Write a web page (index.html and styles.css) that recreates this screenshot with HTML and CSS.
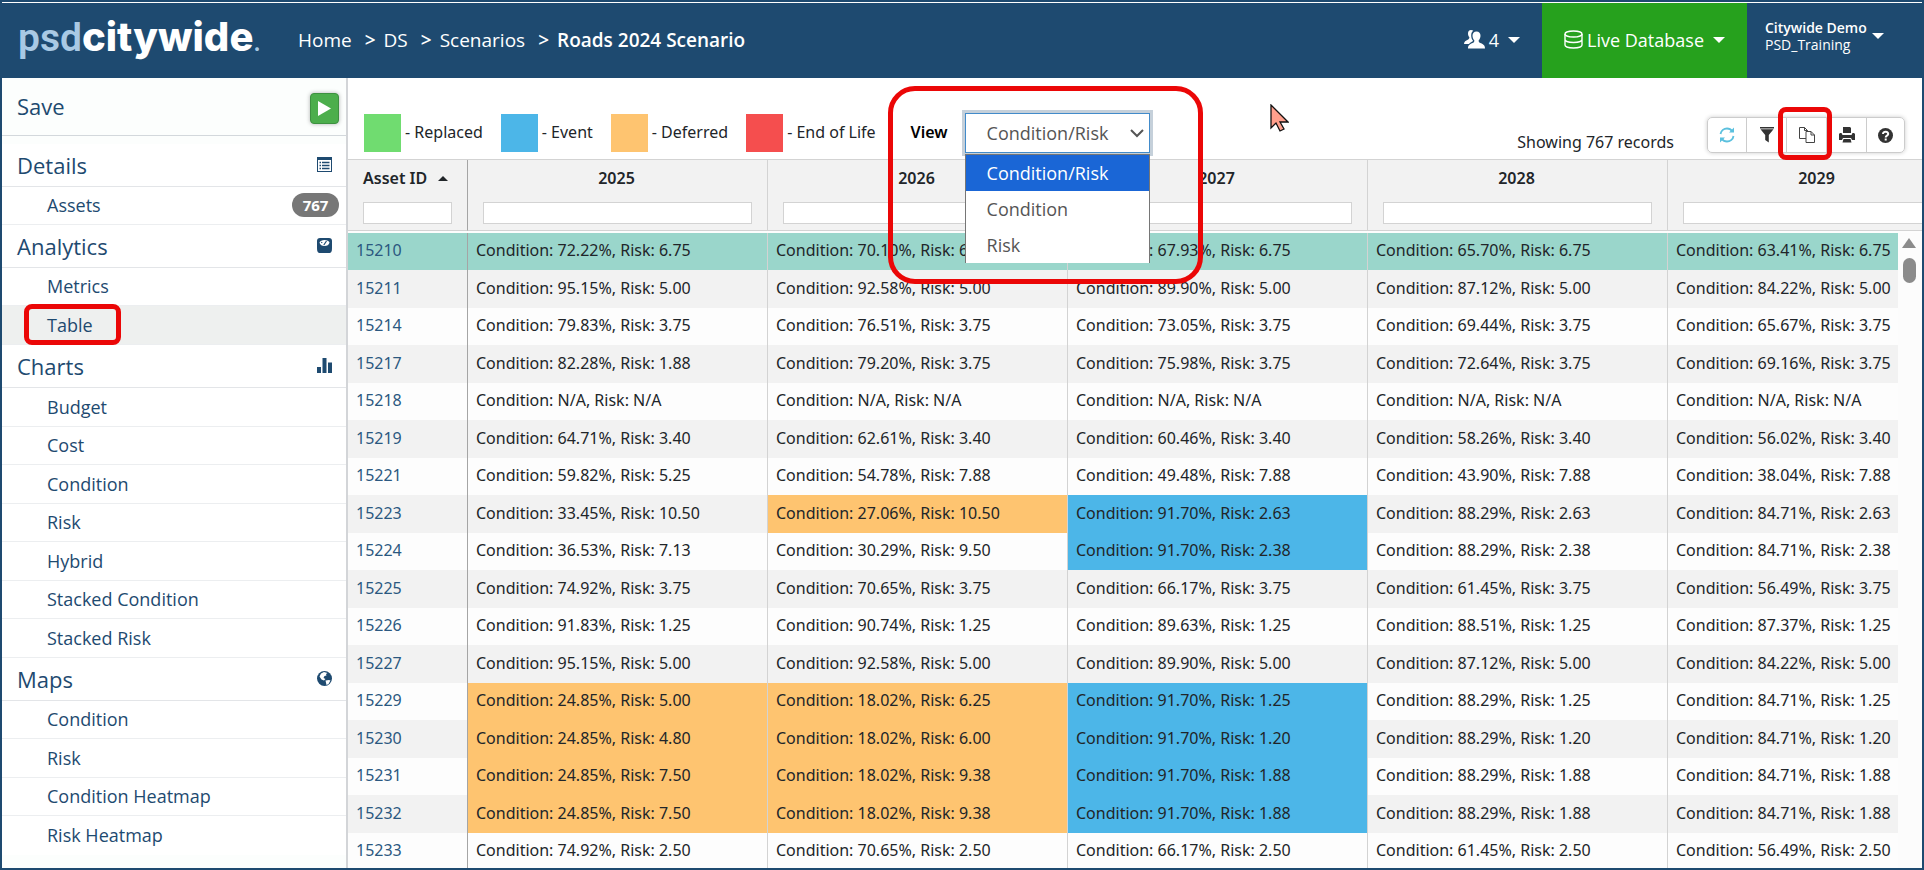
FILE: index.html
```html
<!DOCTYPE html>
<html lang="en">

<head>
    <meta charset="utf-8">
    <title>Roads 2024 Scenario</title>
    <link rel="stylesheet" href="styles.css">
</head>

<body>
    <div class="app">
        <header class="topbar">
            <a href="#" class="logo"><span class="logo-light">psd</span>citywide<span class="logo-dot">.</span></a>
            <nav class="breadcrumbs">
                <a href="#">Home</a>
                <span class="sep">&gt;</span>
                <a href="#">DS</a>
                <span class="sep">&gt;</span>
                <a href="#">Scenarios</a>
                <span class="sep">&gt;</span>
                <strong>Roads 2024 Scenario</strong>
            </nav>
            <button type="button" class="top-button users">
                <svg width="21" height="19" viewBox="0 0 21 19" fill="currentColor">
                    <path d="M7 0c-2 0-3 1.500-3 3.500 0 1.500.5 2.800 1.300 3.600.2 1.400-.3 2-1.500 2.600C1.800 10.700 0 11.500 0 14h5c1-1.500 3-2.300 4.200-3-1.400-1.500-2-3.300-2-5.500C7.200 3 8 1.500 9.300.8 8.700.3 8 0 7 0z" />
                    <path d="M12.500 1.500c-2.600 0-4 1.700-4 4.200 0 1.800.7 3.500 1.800 4.500.3 1.700-.6 2.300-2.300 3.100C6 14.300 4 15 4 18.500h17c0-3.500-2-4.200-4-5.200-1.700-.8-2.600-1.400-2.300-3.100 1.100-1 1.800-2.700 1.800-4.500 0-2.500-1.400-4.200-4-4.200z" />
                </svg>
                4<span class="caret"></span>
            </button>
            <button type="button" class="top-button database">
                <svg width="19" height="19" viewBox="0 0 19 19" fill="none" stroke="currentColor" stroke-width="1.400">
                    <ellipse cx="9.500" cy="4" rx="8.500" ry="3" />
                    <path d="M1 4v11c0 1.700 3.800 3 8.500 3s8.500-1.300 8.500-3V4M1 9.500c0 1.700 3.800 3 8.500 3s8.500-1.300 8.500-3" />
                </svg>
                Live Database<span class="caret"></span>
            </button>
            <button type="button" class="top-button account">
                <span class="account-name"><strong>Citywide Demo</strong>PSD_Training</span>
                <span class="caret"></span>
            </button>
        </header>

        <div class="body">
            <aside class="sidebar">
                <div class="save-row">
                    <a href="#">Save</a>
                    <button type="button" class="run-button" aria-label="Run">
                        <svg width="13" height="15" viewBox="0 0 13 15"><path d="M0 0l13 7.500L0 15z" fill="#fff" /></svg>
                    </button>
                </div>
                <h2>Details
                    <svg width="15" height="15" viewBox="0 0 15 15">
                        <path d="M0 0h15v15H0z" fill="#1e4a70" />
                        <path d="M1 3h13v11H1z" fill="#fff" />
                        <path d="M2.500 5.500H4M2.500 8.500H4M2.500 11.500H4M5 5.500h7.500M5 8.500h7.500M5 11.500h7.500" stroke="#1e4a70" stroke-width="1.600" />
                    </svg>
                </h2>
                <ul>
                    <li><a href="#">Assets</a><span class="badge">767</span></li>
                </ul>
                <h2>Analytics
                    <svg width="15" height="15" viewBox="0 0 15 15">
                        <path d="M3 0h9c2 0 3 1 3 3v7c0 4-1 5-3 5H3c-2 0-3-1-3-5V3c0-2 1-3 3-3z" fill="#1e4a70" />
                        <path d="M2.500 4.500C3.500 1 11.500 1 12.500 4.500c-.5 2.500-2.500 3.500-5 3.500s-4.500-1-5-3.500z" fill="#fff" />
                        <path d="M6.800 7l2.700-4M4.500 5l.5-1" stroke="#1e4a70" stroke-width="1.200" />
                    </svg>
                </h2>
                <ul>
                    <li><a href="#">Metrics</a></li>
                    <li class="active"><a href="#">Table</a><span class="mark mark-table"></span></li>
                </ul>
                <h2>Charts
                    <svg width="15" height="15" viewBox="0 0 15 15" fill="#1e4a70">
                        <path d="M0 9h4v6H0zM5.500 0h4v15h-4zM11 4.500h4V15h-4z" />
                    </svg>
                </h2>
                <ul class="charts">
                    <li><a href="#">Budget</a></li>
                    <li><a href="#">Cost</a></li>
                    <li><a href="#">Condition</a></li>
                    <li><a href="#">Risk</a></li>
                    <li><a href="#">Hybrid</a></li>
                    <li><a href="#">Stacked Condition</a></li>
                    <li><a href="#">Stacked Risk</a></li>
                </ul>
                <h2>Maps
                    <svg width="15" height="15" viewBox="0 0 15 15">
                        <circle cx="7.500" cy="7.500" r="7.500" fill="#1e4a70" />
                        <path d="M4 2.500l3-1.500 3.500 1-1.500 1 .5 1.500-2 .5L6.500 7l2 1L7 9.500 4.500 8.500 2.500 5.500zM8.500 9.500l3.500-.5 1.500.5-2 3.500-2 1z" fill="#fff" />
                    </svg>
                </h2>
                <ul class="maps">
                    <li><a href="#">Condition</a></li>
                    <li><a href="#">Risk</a></li>
                    <li><a href="#">Condition Heatmap</a></li>
                    <li><a href="#">Risk Heatmap</a></li>
                </ul>
            </aside>

            <main class="content">
                <div class="toolbar">
                    <div class="legend">
                        <span class="swatch replaced"></span><span class="legend-text">- Replaced</span>
                        <span class="swatch event"></span><span class="legend-text">- Event</span>
                        <span class="swatch deferred"></span><span class="legend-text">- Deferred</span>
                        <span class="swatch end"></span><span class="legend-text">- End of Life</span>
                    </div>
                    <label class="view-label" for="view">View</label>
                    <div class="view-picker">
                        <select id="view">
                            <option>Condition/Risk</option>
                            <option>Condition</option>
                            <option>Risk</option>
                        </select>
                        <svg class="chevron" width="14" height="9" viewBox="0 0 14 9" fill="none" stroke="#555" stroke-width="2"><path d="M1 1l6 6 6-6" /></svg>
                        <ul class="view-options">
                            <li class="selected">Condition/Risk</li>
                            <li>Condition</li>
                            <li>Risk</li>
                        </ul>
                        <span class="mark mark-view"></span>
                    </div>
                    <svg class="pointer" width="19" height="28" viewBox="0 0 19 28">
                        <path d="M1 1v23l5-5 4 8 4-2-4-7h8z" fill="#ff9f8c" stroke="#111" stroke-width="1.300" />
                    </svg>
                    <span class="record-count">Showing 767 records</span>
                    <div class="button-group">
                        <button type="button" aria-label="Refresh">
                            <svg width="16" height="16" viewBox="0 0 16 16" fill="none" stroke="#5bc0de" stroke-width="1.800">
                                <path d="M1.500 7C2 3.500 5 1.500 8 1.500c2.200 0 4 1 5.200 2.800M14.500 9c-.5 3.500-3.500 5.500-6.500 5.500-2.200 0-4-1-5.200-2.800" />
                                <path d="M15 .5V5.500h-5zM1 15.500v-5h5z" fill="#5bc0de" stroke="none" />
                            </svg>
                        </button>
                        <button type="button" aria-label="Filter">
                            <svg width="14" height="16" viewBox="0 0 14 16" fill="#333"><path d="M0 0h14v1.500H0zM.5 2.200h13L8.800 8v7.500L5.200 13V8z" /></svg>
                        </button>
                        <button type="button" aria-label="Copy">
                            <svg width="16" height="16" viewBox="0 0 16 16" fill="#fff" stroke="#444">
                                <path d="M.5.5h5l3 3v8h-8zM5.500.5v3h3" />
                                <path d="M7 4.500h5l3.500 3.500v7.500H7zM12 4.500V8h3.500" />
                            </svg>
                            <span class="mark mark-copy"></span>
                        </button>
                        <button type="button" aria-label="Print">
                            <svg width="16" height="16" viewBox="0 0 16 16" fill="#333"><path d="M4 0h7l1 1v5H4zM1 6h1.500l1 2h9l1-2H15l1 1v6h-3l-1-2H4l-1 2H0V7zM4.500 12h7l1 3.500h-9z" /></svg>
                        </button>
                        <button type="button" aria-label="Help">
                            <svg width="15" height="15" viewBox="0 0 15 15">
                                <circle cx="7.500" cy="7.500" r="7.500" fill="#333" />
                                <path d="M5 6c0-3.300 5.200-3 5.200 0 0 1.800-2.500 1.500-2.500 3.500M7.700 10.500v2" fill="none" stroke="#fff" stroke-width="2" />
                            </svg>
                        </button>
                    </div>
                </div>

                <div class="grid-wrap">
                    <table class="grid">
                        <colgroup>
                            <col class="col-id">
                            <col><col><col><col><col>
                        </colgroup>
                        <thead>
                            <tr>
                                <th><span class="th-title">Asset ID <span class="sort"></span></span><input type="text" aria-label="Filter Asset ID"></th>
                                <th><span class="th-title">2025</span><input type="text" aria-label="Filter 2025"></th>
                                <th><span class="th-title">2026</span><input type="text" aria-label="Filter 2026"></th>
                                <th><span class="th-title">2027</span><input type="text" aria-label="Filter 2027"></th>
                                <th><span class="th-title">2028</span><input type="text" aria-label="Filter 2028"></th>
                                <th><span class="th-title">2029</span><input type="text" aria-label="Filter 2029"></th>
                            </tr>
                        </thead>
                        <tbody>
                            <tr class="current"><td><a href="#">15210</a></td><td>Condition: 72.22%, Risk: 6.75</td><td>Condition: 70.10%, Risk: 6.75</td><td>Condition: 67.93%, Risk: 6.75</td><td>Condition: 65.70%, Risk: 6.75</td><td>Condition: 63.41%, Risk: 6.75</td></tr>
                            <tr><td><a href="#">15211</a></td><td>Condition: 95.15%, Risk: 5.00</td><td>Condition: 92.58%, Risk: 5.00</td><td>Condition: 89.90%, Risk: 5.00</td><td>Condition: 87.12%, Risk: 5.00</td><td>Condition: 84.22%, Risk: 5.00</td></tr>
                            <tr><td><a href="#">15214</a></td><td>Condition: 79.83%, Risk: 3.75</td><td>Condition: 76.51%, Risk: 3.75</td><td>Condition: 73.05%, Risk: 3.75</td><td>Condition: 69.44%, Risk: 3.75</td><td>Condition: 65.67%, Risk: 3.75</td></tr>
                            <tr><td><a href="#">15217</a></td><td>Condition: 82.28%, Risk: 1.88</td><td>Condition: 79.20%, Risk: 3.75</td><td>Condition: 75.98%, Risk: 3.75</td><td>Condition: 72.64%, Risk: 3.75</td><td>Condition: 69.16%, Risk: 3.75</td></tr>
                            <tr><td><a href="#">15218</a></td><td>Condition: N/A, Risk: N/A</td><td>Condition: N/A, Risk: N/A</td><td>Condition: N/A, Risk: N/A</td><td>Condition: N/A, Risk: N/A</td><td>Condition: N/A, Risk: N/A</td></tr>
                            <tr><td><a href="#">15219</a></td><td>Condition: 64.71%, Risk: 3.40</td><td>Condition: 62.61%, Risk: 3.40</td><td>Condition: 60.46%, Risk: 3.40</td><td>Condition: 58.26%, Risk: 3.40</td><td>Condition: 56.02%, Risk: 3.40</td></tr>
                            <tr><td><a href="#">15221</a></td><td>Condition: 59.82%, Risk: 5.25</td><td>Condition: 54.78%, Risk: 7.88</td><td>Condition: 49.48%, Risk: 7.88</td><td>Condition: 43.90%, Risk: 7.88</td><td>Condition: 38.04%, Risk: 7.88</td></tr>
                            <tr><td><a href="#">15223</a></td><td>Condition: 33.45%, Risk: 10.50</td><td class="deferred">Condition: 27.06%, Risk: 10.50</td><td class="event">Condition: 91.70%, Risk: 2.63</td><td>Condition: 88.29%, Risk: 2.63</td><td>Condition: 84.71%, Risk: 2.63</td></tr>
                            <tr><td><a href="#">15224</a></td><td>Condition: 36.53%, Risk: 7.13</td><td>Condition: 30.29%, Risk: 9.50</td><td class="event">Condition: 91.70%, Risk: 2.38</td><td>Condition: 88.29%, Risk: 2.38</td><td>Condition: 84.71%, Risk: 2.38</td></tr>
                            <tr><td><a href="#">15225</a></td><td>Condition: 74.92%, Risk: 3.75</td><td>Condition: 70.65%, Risk: 3.75</td><td>Condition: 66.17%, Risk: 3.75</td><td>Condition: 61.45%, Risk: 3.75</td><td>Condition: 56.49%, Risk: 3.75</td></tr>
                            <tr><td><a href="#">15226</a></td><td>Condition: 91.83%, Risk: 1.25</td><td>Condition: 90.74%, Risk: 1.25</td><td>Condition: 89.63%, Risk: 1.25</td><td>Condition: 88.51%, Risk: 1.25</td><td>Condition: 87.37%, Risk: 1.25</td></tr>
                            <tr><td><a href="#">15227</a></td><td>Condition: 95.15%, Risk: 5.00</td><td>Condition: 92.58%, Risk: 5.00</td><td>Condition: 89.90%, Risk: 5.00</td><td>Condition: 87.12%, Risk: 5.00</td><td>Condition: 84.22%, Risk: 5.00</td></tr>
                            <tr><td><a href="#">15229</a></td><td class="deferred">Condition: 24.85%, Risk: 5.00</td><td class="deferred">Condition: 18.02%, Risk: 6.25</td><td class="event">Condition: 91.70%, Risk: 1.25</td><td>Condition: 88.29%, Risk: 1.25</td><td>Condition: 84.71%, Risk: 1.25</td></tr>
                            <tr><td><a href="#">15230</a></td><td class="deferred">Condition: 24.85%, Risk: 4.80</td><td class="deferred">Condition: 18.02%, Risk: 6.00</td><td class="event">Condition: 91.70%, Risk: 1.20</td><td>Condition: 88.29%, Risk: 1.20</td><td>Condition: 84.71%, Risk: 1.20</td></tr>
                            <tr><td><a href="#">15231</a></td><td class="deferred">Condition: 24.85%, Risk: 7.50</td><td class="deferred">Condition: 18.02%, Risk: 9.38</td><td class="event">Condition: 91.70%, Risk: 1.88</td><td>Condition: 88.29%, Risk: 1.88</td><td>Condition: 84.71%, Risk: 1.88</td></tr>
                            <tr><td><a href="#">15232</a></td><td class="deferred">Condition: 24.85%, Risk: 7.50</td><td class="deferred">Condition: 18.02%, Risk: 9.38</td><td class="event">Condition: 91.70%, Risk: 1.88</td><td>Condition: 88.29%, Risk: 1.88</td><td>Condition: 84.71%, Risk: 1.88</td></tr>
                            <tr><td><a href="#">15233</a></td><td>Condition: 74.92%, Risk: 2.50</td><td>Condition: 70.65%, Risk: 2.50</td><td>Condition: 66.17%, Risk: 2.50</td><td>Condition: 61.45%, Risk: 2.50</td><td>Condition: 56.49%, Risk: 2.50</td></tr>
                        </tbody>
                    </table>
                    <div class="scrollbar">
                        <span class="scroll-up"></span>
                        <span class="scroll-thumb"></span>
                    </div>
                </div>
            </main>
        </div>
    </div>
</body>

</html>
```
FILE: styles.css
```css
* {
    box-sizing: border-box;
}

body {
    margin: 0;
    font-family: "Open Sans", sans-serif;
    font-size: 16px;
    color: #212529;
}

a {
    color: inherit;
    text-decoration: none;
}

button,
select {
    font-family: inherit;
    cursor: pointer;
}

ul {
    list-style: none;
    margin: 0;
    padding: 0;
}

.app {
    height: 100vh;
    display: flex;
    flex-direction: column;
    border: 2px solid #1e4a70;
    overflow: hidden;
}

/* top bar */
.topbar {
    flex: none;
    display: flex;
    align-items: stretch;
    height: 76px;
    border-top: 1px solid #fff;
    background-color: #1e4a70;
    color: #fff;
}

.logo {
    width: 280px;
    padding-left: 16px;
    font-family: Inter, sans-serif;
    font-size: 40px;
    font-weight: 800;
    line-height: 68px;
    white-space: nowrap;
}

.logo-light {
    color: #a9c9e4;
    font-family: Roboto, sans-serif;
    font-size: 39px;
    font-weight: 600;
}

.logo-dot {
    font-size: 20px;
    color: #a9c9e4;
}

.breadcrumbs {
    flex: 1;
    display: flex;
    align-items: center;
    padding: 0 0 2px 16px;
    font-size: 19px;
}

.breadcrumbs .sep {
    margin: 0 8px 0 13px;
    font-weight: 600;
}

.breadcrumbs strong {
    font-weight: 600;
}

.top-button {
    display: flex;
    align-items: center;
    border: none;
    padding: 0;
    background: none;
    color: #fff;
    font-size: 18px;
}

.caret {
    margin-left: 5px;
    border: 6px solid transparent;
    border-top-color: #fff;
    border-bottom: none;
}

.users {
    gap: 4px;
    padding: 0 22px 2px 0;
}

.database {
    gap: 4px;
    padding: 0 22px 2px;
    background-color: #26a11d;
}

.account {
    width: 175px;
    padding: 0 0 10px 18px;
    font-size: 14px;
    line-height: 17px;
    text-align: left;
}

.account-name strong {
    display: block;
    font-weight: 600;
}

.body {
    flex: 1;
    display: flex;
    min-height: 0;
}

/* sidebar */
.sidebar {
    flex: none;
    width: 346px;
    border-right: 2px solid #d3d5d8;
    background-color: #fcfefd;
    color: #1e4a70;
    font-size: 18px;
}

.save-row {
    display: flex;
    align-items: center;
    justify-content: space-between;
    height: 58px;
    margin-bottom: 8px;
    padding: 4px 7px 0 15px;
    border-bottom: 1px solid #d3d8dc;
    font-size: 22px;
}

.save-row a {
    padding-bottom: 6px;
}

.run-button {
    display: flex;
    align-items: center;
    justify-content: center;
    width: 29px;
    height: 31px;
    padding: 0;
    border: 1px solid #3d9140;
    border-radius: 4px;
    background-color: #4cae4c;
    box-shadow: 0 0 4px rgba(0, 0, 0, 0.3);
}

.sidebar h2 {
    display: flex;
    align-items: center;
    justify-content: space-between;
    height: 43px;
    margin: 0;
    padding: 0 14px 1px 15px;
    border-bottom: 1px solid #e3e5e8;
    background-color: #fff;
    font-size: 22px;
    font-weight: 400;
}

.sidebar li {
    position: relative;
    display: flex;
    align-items: center;
    justify-content: space-between;
    height: 38px;
    padding: 0 7px 1px 45px;
    border-bottom: 1px solid #eceef0;
    background-color: #fff;
}

.sidebar li:nth-child(even),
.sidebar .charts li:nth-child(odd) {
    height: 39px;
}

.sidebar .charts li:nth-child(even) {
    height: 38px;
}

.sidebar .maps li:last-child {
    border-bottom: none;
}

.sidebar li.active {
    background-color: #eef0ef;
}

.badge {
    width: 47px;
    border-radius: 12px;
    background-color: #777;
    color: #fff;
    font-size: 15px;
    font-weight: 700;
    line-height: 24px;
    text-align: center;
}

/* red highlight boxes */
.mark {
    position: absolute;
    z-index: 3;
    border: 5px solid #eb0707;
    border-radius: 8px;
    pointer-events: none;
}

.mark-table {
    top: -2px;
    left: 22px;
    width: 97px;
    height: 41px;
}

.mark-view {
    top: -27px;
    left: -77px;
    width: 315px;
    height: 198px;
    border-radius: 27px;
}

.mark-copy {
    top: -11px;
    left: -9px;
    width: 54px;
    height: 53px;
}

/* toolbar */
.content {
    flex: 1;
    display: flex;
    flex-direction: column;
    min-width: 0;
    font-family: "Noto Sans", sans-serif;
}

.toolbar {
    flex: none;
    display: flex;
    align-items: flex-end;
    height: 82px;
    padding: 0 17px 6px 16px;
    border-bottom: 1px solid #d3d3d3;
}

.legend {
    display: flex;
    align-items: center;
    height: 40px;
    white-space: nowrap;
}

.legend-text {
    padding-bottom: 2px;
}

.swatch {
    width: 37px;
    height: 38px;
    margin: 0 4px 0 18px;
}

.swatch:first-child {
    margin-left: 0;
}

.replaced {
    background-color: #70dc70;
}

.event {
    background-color: #4cb6e8;
}

.deferred {
    background-color: #fec470;
}

.end {
    background-color: #f54e4e;
}

.view-label {
    height: 40px;
    margin: 0 17px 0 35px;
    color: #000;
    font-weight: 600;
    line-height: 38px;
}

.view-picker {
    position: relative;
    width: 185px;
    height: 40px;
    font-family: "Open Sans", sans-serif;
}

.view-picker select {
    appearance: none;
    width: 100%;
    height: 40px;
    padding: 0 21px;
    border: 1px solid #428bca;
    border-radius: 0;
    outline: 3px solid #c5d0da;
    background-color: #fff;
    color: #555;
    font-size: 18px;
}

.chevron {
    position: absolute;
    top: 16px;
    right: 6px;
}

.view-options {
    position: absolute;
    z-index: 2;
    top: 41px;
    left: 0;
    width: 100%;
    border: 1px solid #767676;
    border-bottom: none;
    background-color: #fff;
    color: #555;
    font-size: 18px;
}

.view-options li {
    padding-left: 21px;
    line-height: 36px;
}

.view-options .selected {
    background-color: #1a66d6;
    color: #fff;
}

.pointer {
    margin: 0 0 21px 120px;
}

.record-count {
    margin-left: auto;
    line-height: 22px;
}

.button-group {
    display: flex;
    margin-left: 33px;
    border: 1px solid #ccc;
    border-radius: 5px;
    box-shadow: 0 0 4px rgba(0, 0, 0, 0.2);
}

.button-group button {
    position: relative;
    display: flex;
    align-items: center;
    justify-content: center;
    width: 40px;
    height: 34px;
    padding: 0;
    border: none;
    border-left: 1px solid #ccc;
    background: none;
}

.button-group button:first-child {
    width: 38px;
    border-left: none;
}

.button-group button:last-child {
    width: 38px;
}

/* data grid */
.grid-wrap {
    flex: 1;
    position: relative;
    min-height: 0;
    overflow: hidden;
    background-color: #fdfdfd;
}

.grid {
    width: 1620px;
    border-collapse: separate;
    border-spacing: 0;
    table-layout: fixed;
}

.col-id {
    width: 120px;
}

.grid th {
    height: 71px;
    padding: 0 15px;
    border-right: 1px solid #d3d3d3;
    border-bottom: 1px solid #d3d3d3;
    background-color: #f2f2f2;
    font-weight: 600;
    vertical-align: top;
}

.grid th:first-child,
.grid td:first-child {
    border-right-color: #a5a5a5;
}

.th-title {
    display: flex;
    align-items: center;
    justify-content: center;
    height: 36px;
    margin-bottom: 6px;
    padding-right: 2px;
}

.grid th:first-child .th-title {
    justify-content: flex-start;
}

.sort {
    margin-left: 11px;
    border: 5px solid transparent;
    border-bottom-color: #212529;
    border-top: none;
}

.grid th input {
    display: block;
    width: 100%;
    height: 22px;
    border: 1px solid #d3d3d3;
    background-color: #fff;
}

.grid tbody::before {
    content: "";
    display: block;
    height: 2px;
}

.grid td {
    height: 38px;
    padding: 0 8px 3px;
    border-right: 1px solid #d3d3d3;
    line-height: 22px;
    white-space: nowrap;
}

.grid tr:nth-child(odd) td {
    height: 37px;
}

.grid tr:nth-child(even) {
    background-color: #f2f2f2;
}

.grid td a {
    color: #2b5880;
}

.grid tr.current {
    background-color: #9ad6cb;
}

.scrollbar {
    position: absolute;
    top: 73px;
    right: 0;
    bottom: 0;
    display: flex;
    flex-direction: column;
    align-items: center;
    width: 24px;
    padding: 5px 2px 0 0;
    background-color: #fcfcfc;
}

.scroll-up {
    border: 7px solid transparent;
    border-bottom: 10px solid #8b8b8b;
    border-top: none;
}

.scroll-thumb {
    width: 13px;
    height: 25px;
    margin-top: 10px;
    border-radius: 7px;
    background-color: #8b8b8b;
}
```
